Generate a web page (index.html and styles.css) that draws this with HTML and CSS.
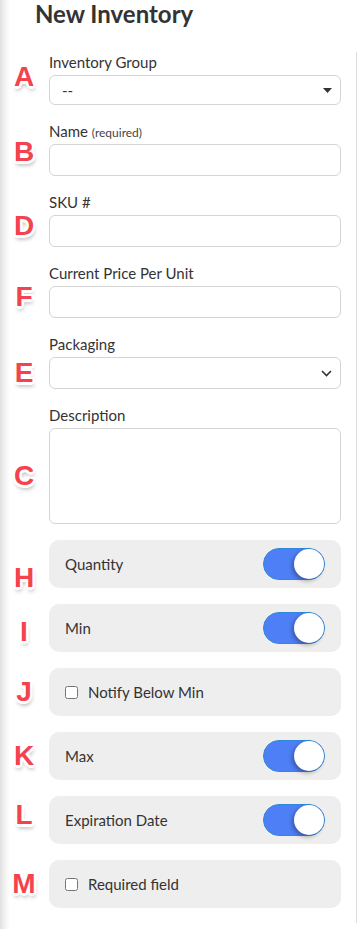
FILE: index.html
```html
<!DOCTYPE html>
<html lang="en">
  <head>
    <meta charset="UTF-8" />
    <meta name="viewport" content="width=device-width, initial-scale=1.0" />
    <title>New Inventory</title>
    <link rel="stylesheet" href="styles.css">
  </head>
  <body>
    <header class="title">
      <h1>New Inventory</h1>
    </header>

    <form class="inventory-form" id="inventory">
      <div class="field">
        <span class="mark mark-a">A</span>
        <span class="label">Inventory Group</span>
        <div class="select-wrap">
          <select class="input select short">
            <option>--</option>
          </select>
          <svg class="select-icon" width="9" height="5" viewBox="0 0 9 5">
            <path d="M0 0h9L4.5 5z" fill="#333" />
          </svg>
        </div>
      </div>

      <div class="field">
        <span class="mark mark-b">B</span>
        <span class="label">Name <small>(required)</small></span>
        <input type="text" class="input" name="name" />
      </div>

      <div class="field">
        <span class="mark mark-d">D</span>
        <span class="label">SKU #</span>
        <input type="text" class="input" name="sku" />
      </div>

      <div class="field">
        <span class="mark mark-f">F</span>
        <span class="label">Current Price Per Unit</span>
        <input type="text" class="input" name="price" />
      </div>

      <div class="field">
        <span class="mark">E</span>
        <span class="label">Packaging</span>
        <div class="select-wrap">
          <select class="input select">
            <option></option>
          </select>
          <svg class="select-icon chevron" width="11" height="7" viewBox="0 0 11 7">
            <path d="M1 1l4.5 4.5L10 1" fill="none" stroke="#333" stroke-width="1.6" />
          </svg>
        </div>
      </div>

      <div class="field">
        <span class="mark">C</span>
        <span class="label">Description</span>
        <textarea class="input textarea" name="description"></textarea>
      </div>

      <div class="row">
        <span class="mark mark-h">H</span>
        <div class="card">
          <span>Quantity</span>
          <span class="switch"><span class="knob"></span></span>
        </div>
      </div>

      <div class="row">
        <span class="mark mark-i">I</span>
        <div class="card">
          <span>Min</span>
          <span class="switch"><span class="knob"></span></span>
        </div>
      </div>

      <div class="row">
        <span class="mark">J</span>
        <label class="card check">
          <input type="checkbox" />
          <span>Notify Below Min</span>
        </label>
      </div>

      <div class="row">
        <span class="mark">K</span>
        <div class="card">
          <span>Max</span>
          <span class="switch"><span class="knob"></span></span>
        </div>
      </div>

      <div class="row">
        <span class="mark mark-l">L</span>
        <div class="card">
          <span>Expiration Date</span>
          <span class="switch"><span class="knob"></span></span>
        </div>
      </div>

      <div class="row">
        <span class="mark">M</span>
        <label class="card check">
          <input type="checkbox" />
          <span>Required field</span>
        </label>
      </div>
    </form>
  </body>
</html>
```

FILE: styles.css
```css
* {
    margin: 0;
    padding: 0;
    outline: 0;
    box-sizing: border-box;
}
body {
    width: 100%;
    min-height: 100vh;
    background: linear-gradient(to right, #e0e0e0 0, #f3f3f3 5px, #fff 10px);
    font-family: Lato, "Open Sans", sans-serif;
    color: #333;
}
header.title {
    height: 52px;
    padding-left: 35px;
}
header.title h1 {
    font-size: 24px;
    line-height: 28px;
    font-weight: bold;
    color: #333;
}

.inventory-form {
    width: 357px;
    padding: 0 15px 15px 0;
    border-right: 1px solid #ddd;
    display: flex;
    flex-direction: column;
    gap: 16px;
}

.field {
    display: grid;
    grid-template-columns: 49px 1fr;
    grid-template-areas:
        ". label"
        "mark control";
    row-gap: 3px;
}
.field .label {
    grid-area: label;
    font-size: 15px;
    line-height: 20px;
    color: #333;
}
.field .label small {
    font-size: 12px;
    line-height: 1;
    color: #444;
}
.field .input,
.field .select-wrap {
    grid-area: control;
}

.input {
    width: 100%;
    height: 32px;
    border: 1px solid #d4d4d4;
    border-radius: 6px;
    background: #fff;
    padding: 0 12px;
    font-family: Lato, sans-serif;
    font-size: 15px;
    color: #333;
}
.select-wrap {
    position: relative;
}
.select {
    appearance: none;
    -webkit-appearance: none;
    display: block;
}
.select.short {
    height: 30px;
}
.select-icon {
    position: absolute;
    right: 9px;
    top: 13px;
}
.select-icon.chevron {
    right: 9px;
    top: 13px;
}
.textarea {
    height: 96px;
    resize: none;
    padding: 8px 12px;
}

.row {
    display: grid;
    grid-template-columns: 49px 1fr;
    align-items: center;
}
.card {
    height: 48px;
    border-radius: 10px;
    background: #eee;
    padding: 0 16px;
    display: flex;
    align-items: center;
    justify-content: space-between;
    font-size: 15px;
    color: #333;
}
.card.check {
    justify-content: flex-start;
}
.card.check input {
    width: 13px;
    height: 13px;
    margin: 0 10px 0 0;
}

.switch {
    width: 62px;
    height: 32px;
    border: 1px solid #2e8ad6;
    border-radius: 16px;
    background: #4f7ff6;
    display: flex;
    justify-content: flex-end;
}
.switch .knob {
    width: 30px;
    height: 30px;
    border-radius: 50%;
    background: #fff;
    box-shadow: -2px 2px 4px rgba(0, 0, 0, 0.3);
}

/* annotation letters, nudged with paired margins so rows keep their height */
.mark {
    grid-area: mark;
    align-self: center;
    justify-self: center;
    margin-left: -1px;
    font-family: "Liberation Sans", Arial, sans-serif;
    font-weight: bold;
    font-size: 28px;
    line-height: 1;
    color: #f4434e;
    text-shadow:
        2.5px 0 #fff, -2.5px 0 #fff, 0 2.5px #fff, 0 -2.5px #fff,
        1.8px 1.8px #fff, -1.8px -1.8px #fff, 1.8px -1.8px #fff, -1.8px 1.8px #fff,
        1px 4px 4px rgba(0, 0, 0, 0.35);
}
.row .mark {
    grid-area: auto;
}
.mark-a {
    margin-top: -13px;
    margin-bottom: 13px;
}
.mark-b {
    margin-top: -8px;
    margin-bottom: 8px;
}
.mark-d,
.mark-f,
.mark-l {
    margin-top: -5px;
    margin-bottom: 5px;
}
.mark-h {
    margin-top: 14px;
    margin-bottom: -14px;
}
.mark-i {
    margin-top: 4px;
    margin-bottom: -4px;
}
```
